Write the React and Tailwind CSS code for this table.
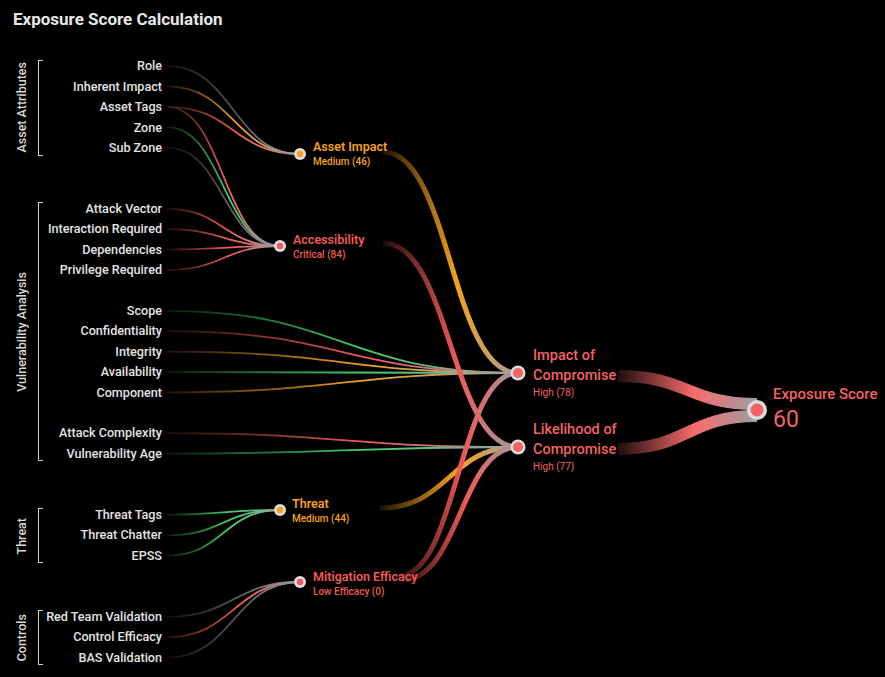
import React from 'react';

const ORANGE = '#f5a21c';
const RED = '#f05a55';
const GREEN = '#3fcf68';
const GRAY = '#5a5a5a';

const groups = [
  { name: 'Asset Attributes', rows: ['Role', 'Inherent Impact', 'Asset Tags', 'Zone', 'Sub Zone'] },
  {
    name: 'Vulnerability Analysis',
    rows: [
      'Attack Vector', 'Interaction Required', 'Dependencies', 'Privilege Required', '',
      'Scope', 'Confidentiality', 'Integrity', 'Availability', 'Component', '',
      'Attack Complexity', 'Vulnerability Age',
    ],
  },
  { name: 'Threat', rows: ['Threat Tags', 'Threat Chatter', 'EPSS'] },
  { name: 'Controls', rows: ['Red Team Validation', 'Control Efficacy', 'BAS Validation'] },
];

const rowY = (i) => 66 + 20.4 * i;
const SX = 167;

// [sourceX, sourceY, targetX, targetY, colour, width]
const links = [
  // Asset Impact
  [SX, rowY(0), 300, 154, GRAY, 1.8],
  [SX, rowY(1), 300, 154, ORANGE, 1.8],
  [SX, rowY(2), 300, 154, '#f0605a', 1.8],
  // Accessibility
  [SX, rowY(2), 280, 246, '#f0605a', 1.8],
  [SX, rowY(3), 280, 246, GREEN, 1.8],
  [SX, rowY(4), 280, 246, GRAY, 1.8],
  [SX, rowY(7), 280, 246, RED, 1.8],
  [SX, rowY(8), 280, 246, RED, 1.8],
  [SX, rowY(9), 280, 246, RED, 1.8],
  [SX, rowY(10), 280, 246, RED, 1.8],
  // Impact of Compromise
  [SX, rowY(12), 518, 373, GREEN, 1.8],
  [SX, rowY(13), 518, 373, RED, 1.8],
  [SX, rowY(14), 518, 373, ORANGE, 1.8],
  [SX, rowY(15), 518, 373, GREEN, 1.8],
  [SX, rowY(16), 518, 373, ORANGE, 1.8],
  // Likelihood
  [SX, rowY(18), 518, 447, RED, 1.8],
  [SX, rowY(19), 518, 447, GREEN, 1.8],
  // Threat
  [SX, rowY(22), 280, 510, GREEN, 1.8],
  [SX, rowY(23), 280, 510, GREEN, 1.8],
  [SX, rowY(24), 280, 510, GREEN, 1.8],
  // Mitigation
  [SX, rowY(27), 300, 582, GRAY, 1.8],
  [SX, rowY(28), 300, 582, RED, 1.8],
  [SX, rowY(29), 300, 582, GRAY, 1.8],
  // second level
  [383, 152, 518, 373, ORANGE, 5],
  [383, 243, 518, 447, RED, 5],
  [380, 508, 518, 447, ORANGE, 5],
  [398, 576, 518, 373, RED, 5],
  [402, 580, 518, 447, RED, 5],
  // to exposure score
  [618, 376, 757, 404, '#f76c6c', 12],
  [618, 449, 757, 416, '#f76c6c', 12],
];

const nodes = [
  [300, 154, ORANGE, 6, 3.2],
  [280, 246, RED, 6, 3.2],
  [280, 510, ORANGE, 6, 3.2],
  [300, 582, RED, 6, 3.2],
  [518, 373, '#f46262', 7.5, 5],
  [518, 447, '#f46262', 7.5, 5],
  [757, 410, '#f46262', 10, 6.5],
];

const curve = ([x0, y0, x1, y1]) => {
  const xm = (x0 + x1) / 2;
  return `M${x0},${y0} C${xm},${y0} ${xm},${y1} ${x1},${y1}`;
};

const Flows = () => (
  <svg className="absolute inset-0" width="885" height="677" viewBox="0 0 885 677">
    <defs>
      {links.map((l, i) => (
        <linearGradient key={i} id={`g${i}`} gradientUnits="userSpaceOnUse" x1={l[0]} y1="0" x2={l[2]} y2="0">
          <stop offset="0" stopColor={l[4]} stopOpacity="0.12" />
          <stop offset="0.55" stopColor={l[4]} stopOpacity="1" />
          <stop offset="1" stopColor="#9d9ea6" stopOpacity="1" />
        </linearGradient>
      ))}
    </defs>
    {links.map((l, i) => (
      <path key={i} d={curve(l)} fill="none" stroke={`url(#g${i})`} strokeWidth={l[5]} />
    ))}
    {nodes.map(([x, y, c, r, ri], i) => (
      <g key={i}>
        <circle cx={x} cy={y} r={r} fill="#dcdcdc" />
        <circle cx={x} cy={y} r={ri} fill={c} />
      </g>
    ))}
  </svg>
);

const NodeLabel = ({ className, title, sub, color }) => (
  <div className={`absolute ${className}`} style={{ color }}>
    <div className="text-[12.5px] leading-[15px] font-semibold">{title}</div>
    <div className="text-[10px] leading-[13px] mt-[1px] font-medium">{sub}</div>
  </div>
);

const App = () => {
  return (
    <div
      className="relative w-[885px] h-[677px] bg-black overflow-hidden text-[#e3e3e3]"
      style={{ fontFamily: 'Roboto, "Liberation Sans", sans-serif' }}
    >
      <Flows />

      <div className="relative h-[40px] px-[13px] flex items-center">
        <h1 className="text-[17px] font-bold text-[#e6e6e6]">Exposure Score Calculation</h1>
      </div>

      <div className="relative mt-[16.6px] w-[162px] flex flex-col gap-[40.8px]">
        {groups.map((g) => (
          <div key={g.name} className="flex">
            <div className="ml-[15px] w-[14px] flex items-center justify-center">
              <span className="[writing-mode:vertical-rl] rotate-180 text-[12.5px] leading-[14px] font-medium whitespace-nowrap text-[#d8d8d8]">
                {g.name}
              </span>
            </div>
            <div className="ml-[9px] my-[3px] w-[5px] border-l border-t border-b border-[#cfcfcf]" />
            <div className="flex-1 flex flex-col">
              {g.rows.map((r, i) => (
                <div key={i} className="h-[20.4px] flex items-center justify-end text-[12.6px] font-medium whitespace-nowrap">
                  {r}
                </div>
              ))}
            </div>
          </div>
        ))}
      </div>

      <NodeLabel className="left-[313px] top-[138.5px]" title="Asset Impact" sub="Medium (46)" color={ORANGE} />
      <NodeLabel className="left-[293px] top-[231.5px]" title="Accessibility" sub="Critical (84)" color={RED} />
      <NodeLabel className="left-[292px] top-[495.5px]" title="Threat" sub="Medium (44)" color={ORANGE} />
      <NodeLabel className="left-[313px] top-[568.5px]" title="Mitigation Efficacy" sub="Low Efficacy (0)" color={RED} />

      <div className="absolute left-[533px] top-[346px] text-[#f46262]">
        <div className="text-[14.5px] leading-[20px] font-medium">Impact of<br />Compromise</div>
        <div className="text-[10px] leading-[13px]">High (78)</div>
      </div>
      <div className="absolute left-[533px] top-[420px] text-[#f46262]">
        <div className="text-[14.5px] leading-[20px] font-medium">Likelihood of<br />Compromise</div>
        <div className="text-[10px] leading-[13px]">High (77)</div>
      </div>
      <div className="absolute left-[773px] top-[385px] text-[#f46262]">
        <div className="text-[15px] leading-[18px] font-medium">Exposure Score</div>
        <div className="text-[23px] leading-[28px] mt-[3px]">60</div>
      </div>
    </div>
  );
};

export default App;
